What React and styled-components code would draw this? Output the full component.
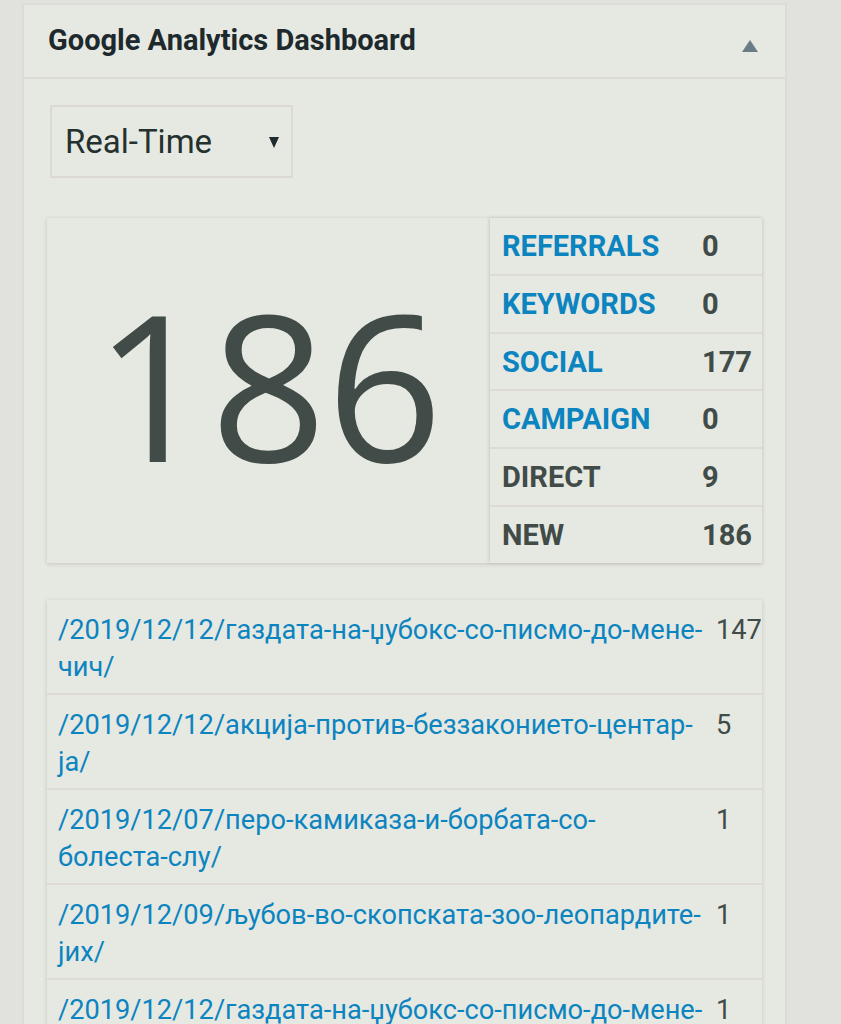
import React from "react";
import styled, { createGlobalStyle } from "styled-components";

const GlobalStyle = createGlobalStyle`
  html, body {
    margin: 0;
    padding: 0;
    background: #e1e2dd;
  }
  body {
    font-family: Roboto, "Noto Sans", "Liberation Sans", sans-serif;
  }
`;

const sources = [
  { label: "Referrals", value: 0, link: true },
  { label: "Keywords", value: 0, link: true },
  { label: "Social", value: 177, link: true },
  { label: "Campaign", value: 0, link: true },
  { label: "Direct", value: 9 },
  { label: "New", value: 186 },
];

const pages = [
  { path: "/2019/12/12/газдата-на-џубокс-со-писмо-до-мене-чич/", count: 147 },
  { path: "/2019/12/12/акција-против-беззаконието-центар-ја/", count: 5 },
  { path: "/2019/12/07/перо-камиказа-и-борбата-со-болеста-слу/", count: 1 },
  { path: "/2019/12/09/љубов-во-скопската-зоо-леопардите-јих/", count: 1 },
  { path: "/2019/12/12/газдата-на-џубокс-со-писмо-до-мене-чич/", count: 1 },
];

export default function App() {
  return (
    <>
      <GlobalStyle />
      <Page>
        <Widget>
          <WidgetHeader>
            <WidgetTitle>Google Analytics Dashboard</WidgetTitle>
            <Toggle aria-label="collapse" />
          </WidgetHeader>
          <WidgetBody>
            <SelectBox>
              <span>Real-Time</span>
              <SelectArrow />
            </SelectBox>

            <StatsBox>
              <BigNumber>186</BigNumber>
              <SourceTable>
                {sources.map((s) => (
                  <SourceRow key={s.label}>
                    <SourceLabel $link={s.link}>{s.label}</SourceLabel>
                    <SourceValue>{s.value}</SourceValue>
                  </SourceRow>
                ))}
              </SourceTable>
            </StatsBox>

            <PageList>
              {pages.map((p, i) => (
                <PageRow key={i}>
                  <PageLink href="#">{p.path}</PageLink>
                  <PageCount>{p.count}</PageCount>
                </PageRow>
              ))}
            </PageList>
          </WidgetBody>
        </Widget>
      </Page>
    </>
  );
}

const Page = styled.div`
  padding: 3px 0 0 22px;
  height: 1024px;
  overflow: hidden;
  box-sizing: border-box;
`;

const Widget = styled.div`
  width: 765px;
  box-sizing: border-box;
  background: #e6e8e2;
  border: 2px solid #dcdbd6;
  border-bottom: none;
`;

const WidgetHeader = styled.div`
  display: flex;
  align-items: center;
  justify-content: space-between;
  height: 72px;
  padding: 0 27px 0 24px;
  border-bottom: 2px solid #dcdbd6;
`;

const WidgetTitle = styled.h2`
  margin: 0;
  font-size: 29px;
  font-weight: 700;
  color: #1d292c;
  padding-bottom: 2px;
`;

const Toggle = styled.span`
  width: 0;
  height: 0;
  margin-top: 10px;
  border-left: 8px solid transparent;
  border-right: 8px solid transparent;
  border-bottom: 12px solid #6a7d86;
`;

const WidgetBody = styled.div`
  padding: 26px 23px 0 23px;
`;

const SelectBox = styled.div`
  display: flex;
  align-items: center;
  justify-content: space-between;
  width: 243px;
  height: 73px;
  box-sizing: border-box;
  margin-left: 3px;
  padding: 0 12px 0 13px;
  border: 2px solid #dcd8d4;
  font-size: 33px;
  color: #24312f;
`;

const SelectArrow = styled.span`
  width: 0;
  height: 0;
  margin-top: 2px;
  border-left: 5px solid transparent;
  border-right: 5px solid transparent;
  border-top: 11px solid #1f2b2d;
`;

const StatsBox = styled.div`
  display: flex;
  margin-top: 40px;
  height: 345px;
  background: #e6e8e2;
  box-shadow: 0 1px 4px rgba(90, 70, 70, 0.22);
`;

const BigNumber = styled.div`
  flex: 0 0 443px;
  display: flex;
  align-items: center;
  justify-content: center;
  padding-bottom: 14px;
  font-family: "Open Sans", "Noto Sans", sans-serif;
  font-size: 203px;
  color: #414b47;
  line-height: 1;
`;

const SourceTable = styled.div`
  flex: 1;
  display: flex;
  flex-direction: column;
  box-shadow: -1px 0 3px rgba(90, 70, 70, 0.18);
`;

const SourceRow = styled.div`
  flex: 1;
  display: flex;
  align-items: center;
  padding-left: 12px;
  border-bottom: 2px solid #dedbd7;
  &:last-child {
    border-bottom: none;
  }
`;

const SourceLabel = styled.span`
  flex: 0 0 200px;
  font-size: 29px;
  font-weight: 700;
  text-transform: uppercase;
  color: ${(p) => (p.$link ? "#0b84bf" : "#414b47")};
`;

const SourceValue = styled.span`
  font-size: 29px;
  font-weight: 700;
  color: #414b47;
`;

const PageList = styled.div`
  margin-top: 37px;
  background: #e6e8e2;
  box-shadow: 0 1px 4px rgba(90, 70, 70, 0.22);
`;

const PageRow = styled.div`
  display: flex;
  align-items: flex-start;
  height: 95px;
  box-sizing: border-box;
  padding: 12px 0 0 11px;
  border-bottom: 2px solid #dedbd7;
`;

const PageLink = styled.a`
  flex: 0 0 645px;
  font-size: 27.2px;
  line-height: 37px;
  color: #0b84bf;
  text-decoration: none;
`;

const PageCount = styled.span`
  margin-left: 13px;
  font-size: 27.2px;
  line-height: 37px;
  color: #414b47;
`;
